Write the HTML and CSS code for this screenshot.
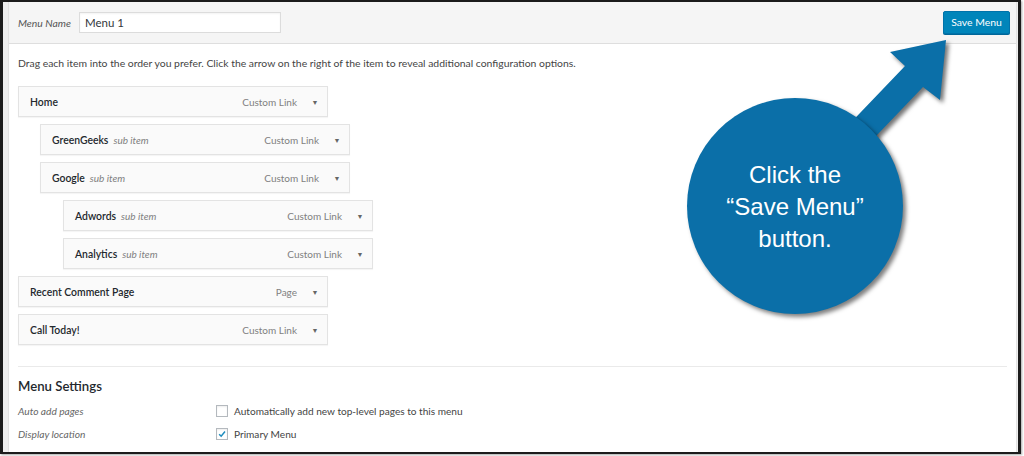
FILE: index.html
```html
<!DOCTYPE html>
<html lang="en">
<head>
<meta charset="utf-8">
<title>Menu editor</title>
<link rel="stylesheet" href="styles.css">
</head>
<body>
<div class="frame">
  <div class="panel">
    <header class="bar">
      <label class="name-label" for="menu-name">Menu Name</label>
      <input id="menu-name" class="name-input" type="text" value="Menu 1">
      <span class="spacer"></span>
      <button class="save-btn" type="button">Save Menu</button>
    </header>
    <main class="content">
      <p class="hint">Drag each item into the order you prefer. Click the arrow on the right of the item to reveal additional configuration options.</p>
      <ul class="items">
        <li class="item depth-0"><span class="title">Home</span><span class="type">Custom Link</span><span class="caret">&#9660;</span></li>
        <li class="item depth-1"><span class="title">GreenGeeks</span><span class="sub">sub item</span><span class="type">Custom Link</span><span class="caret">&#9660;</span></li>
        <li class="item depth-1"><span class="title">Google</span><span class="sub">sub item</span><span class="type">Custom Link</span><span class="caret">&#9660;</span></li>
        <li class="item depth-2"><span class="title">Adwords</span><span class="sub">sub item</span><span class="type">Custom Link</span><span class="caret">&#9660;</span></li>
        <li class="item depth-2"><span class="title">Analytics</span><span class="sub">sub item</span><span class="type">Custom Link</span><span class="caret">&#9660;</span></li>
        <li class="item depth-0"><span class="title">Recent Comment Page</span><span class="type">Page</span><span class="caret">&#9660;</span></li>
        <li class="item depth-0"><span class="title">Call Today!</span><span class="type">Custom Link</span><span class="caret">&#9660;</span></li>
      </ul>
      <hr class="sep">
      <h3 class="settings-title">Menu Settings</h3>
      <div class="settings">
        <span class="set-label">Auto add pages</span>
        <label class="set-value"><span class="box"></span>Automatically add new top-level pages to this menu</label>
        <span class="set-label">Display location</span>
        <label class="set-value"><span class="box checked"><svg viewBox="0 0 12 12" width="12" height="12"><path d="M2.6 6.2 L5 8.6 L9.6 3" fill="none" stroke="#1e8cbe" stroke-width="1.8"/></svg></span>Primary Menu</label>
      </div>
    </main>
  </div>
  <div class="callout">
    <svg class="arrow" viewBox="0 0 300 300" width="300" height="300">
      <polygon points="263,10 257,70 240,57 150,151 132,130 222,36 207,22" fill="#0b6fa8"/>
    </svg>
    <div class="bubble">
      <span>Click the</span>
      <span>&ldquo;Save Menu&rdquo;</span>
      <span>button.</span>
    </div>
  </div>
</div>
</body>
</html>
```

FILE: styles.css
```css
* { box-sizing: border-box; }
html, body { margin: 0; padding: 0; background: #ffffff; }
body { width: 1024px; height: 456px; overflow: hidden; font-family: "Segoe UI", Lato, "Open Sans", sans-serif; color: #444; }

.frame {
  position: relative;
  width: 1021px;
  height: 454px;
  border-style: solid;
  border-color: #1c1c1c;
  border-width: 2px 3px 2px 3px;
  background: #efefef;
  padding: 0 1px 0 5px;
  box-shadow: 1px 1px 2px rgba(0,0,0,0.35);
}

.panel {
  height: 100%;
  background: #fff;
  border-left: 1px solid #e2e2e2;
  border-right: 1px solid #e2e2e2;
  display: flex;
  flex-direction: column;
}

.bar {
  height: 42px;
  background: #f5f5f5;
  border-bottom: 1px solid #dedede;
  display: flex;
  align-items: center;
  padding: 0 6px 0 9px;
}
.name-label {
  font-style: italic;
  font-size: 10.4px;
  color: #555;
  width: 61px;
}
.name-input {
  width: 202px;
  height: 21px;
  border: 1px solid #dcdcdc;
  background: #fff;
  font-family: inherit;
  font-size: 11.5px;
  color: #32373c;
  padding: 0 5px;
  margin-top: -1px;
  box-shadow: inset 0 1px 2px rgba(0,0,0,0.05);
}
.spacer { flex: 1; }
.save-btn {
  width: 67px;
  height: 23px;
  background: #0085ba;
  border: 1px solid #0073aa;
  border-radius: 2px;
  color: #fff;
  font-family: inherit;
  font-size: 10.4px;
  padding: 0;
  margin-top: -1px;
  box-shadow: 0 1px 0 #006799;
}

.content { padding: 0 9px; flex: 1; }
.hint {
  margin: 12px 0 0;
  font-size: 10.4px;
  line-height: 14px;
  color: #444;
}

.items {
  list-style: none;
  margin: 16px 0 0;
  padding: 0;
  display: flex;
  flex-direction: column;
  gap: 7px;
}
.item {
  width: 310px;
  height: 31px;
  border: 1px solid #e3e3e3;
  background: #fafafa;
  box-shadow: 0 1px 1px rgba(0,0,0,0.04);
  display: flex;
  align-items: center;
  padding: 0 7px 0 11px;
  font-size: 10.4px;
}
.depth-1 { margin-left: 22px; }
.depth-2 { margin-left: 45px; }
.title { font-weight: 600; color: #23282d; }
.sub { font-style: italic; color: #808080; margin-left: 5px; font-size: 10px; }
.type { margin-left: auto; color: #808080; font-size: 10px; }
.caret { width: 10px; margin-left: 13px; font-size: 7px; color: #666; text-align: center; }

.sep {
  margin: 21px 0 0;
  border: 0;
  border-top: 1px solid #eaeaea;
}
.settings-title {
  margin: 10px 0 0;
  font-size: 13.2px;
  font-weight: 600;
  color: #23282d;
  line-height: 18px;
}
.settings {
  display: grid;
  grid-template-columns: 198px auto;
  grid-auto-rows: 23px;
  align-items: center;
  margin-top: 4px;
}
.set-label { font-style: italic; font-size: 10.2px; color: #666; }
.set-value { display: flex; align-items: center; font-size: 10.1px; color: #444; }
.box {
  width: 12px;
  height: 12px;
  border: 1px solid #b4b9be;
  background: #fff;
  box-shadow: inset 0 1px 2px rgba(0,0,0,0.07);
  margin-right: 6px;
  display: flex;
  align-items: center;
  justify-content: center;
}
.box svg { display: block; }

.callout {
  position: absolute;
  left: 680px;
  top: 28px;
  width: 300px;
  height: 300px;
}
.arrow {
  position: absolute;
  left: 0;
  top: 0;
  filter: drop-shadow(3px 3px 2px rgba(0,0,0,0.55));
}
.bubble {
  position: absolute;
  left: 4px;
  top: 68px;
  width: 216px;
  height: 216px;
  border-radius: 50%;
  background: #0b6fa8;
  box-shadow: 3px 3px 4px rgba(0,0,0,0.5);
  display: flex;
  flex-direction: column;
  align-items: center;
  justify-content: center;
  color: #fff;
  font-family: "Liberation Sans", Arial, sans-serif;
  font-size: 24px;
  line-height: 32px;
  padding-top: 2px;
}
```
